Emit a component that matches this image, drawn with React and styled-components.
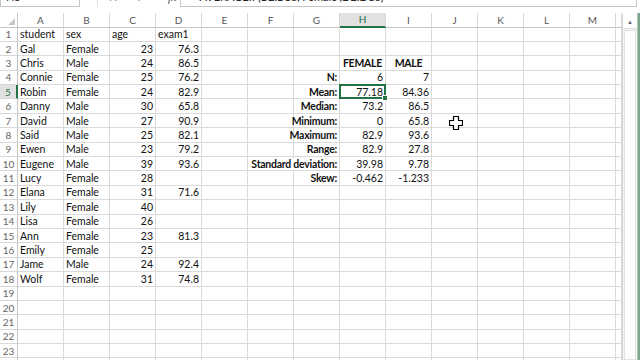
import React from "react";
import styled, { createGlobalStyle } from "styled-components";

const GlobalStyle = createGlobalStyle`
  html, body {
    margin: 0;
    padding: 0;
    background: #fff;
  }
  body {
    font-family: Lato, "Open Sans", sans-serif;
  }
`;

const COLS = ["A", "B", "C", "D", "E", "F", "G", "H", "I", "J", "K", "L", "M"];
const ROW_COUNT = 24;
const ACTIVE_COL = "H";
const ACTIVE_ROW = 5;

const students = [
  ["Gal", "Female", 23, "76.3"],
  ["Chris", "Male", 24, "86.5"],
  ["Connie", "Female", 25, "76.2"],
  ["Robin", "Female", 24, "82.9"],
  ["Danny", "Male", 30, "65.8"],
  ["David", "Male", 27, "90.9"],
  ["Said", "Male", 25, "82.1"],
  ["Ewen", "Male", 23, "79.2"],
  ["Eugene", "Male", 39, "93.6"],
  ["Lucy", "Female", 28, ""],
  ["Elana", "Female", 31, "71.6"],
  ["Lily", "Female", 40, ""],
  ["Lisa", "Female", 26, ""],
  ["Ann", "Female", 23, "81.3"],
  ["Emily", "Female", 25, ""],
  ["Jame", "Male", 24, "92.4"],
  ["Wolf", "Female", 31, "74.8"],
];

const stats = [
  ["N:", "6", "7"],
  ["Mean:", "77.18", "84.36"],
  ["Median:", "73.2", "86.5"],
  ["Minimum:", "0", "65.8"],
  ["Maximum:", "82.9", "93.6"],
  ["Range:", "82.9", "27.8"],
  ["Standard deviation:", "39.98", "9.78"],
  ["Skew:", "-0.462", "-1.233"],
];

// build a sparse map of cell contents: key "H5" -> { value, align, bold }
const buildCells = () => {
  const cells = {};
  const put = (ref, value, align = "left", bold = false) => {
    cells[ref] = { value, align, bold };
  };
  put("A1", "student");
  put("B1", "sex");
  put("C1", "age");
  put("D1", "exam1");
  students.forEach(([name, sex, age, exam], i) => {
    const r = i + 2;
    put(`A${r}`, name);
    put(`B${r}`, sex);
    put(`C${r}`, String(age), "right");
    if (exam) put(`D${r}`, exam, "right");
  });
  put("H3", "FEMALE", "center", true);
  put("I3", "MALE", "center", true);
  stats.forEach(([label, female, male], i) => {
    const r = i + 4;
    put(`G${r}`, label, "right", true);
    put(`H${r}`, female, "right");
    put(`I${r}`, male, "right");
  });
  return cells;
};

const cells = buildCells();

const Window = styled.div`
  position: relative;
  width: 640px;
  height: 360px;
  overflow: hidden;
  display: flex;
  flex-direction: column;
  background: #fff;
`;

const FormulaBar = styled.div`
  height: 13px;
  flex-shrink: 0;
  overflow: hidden;
`;

const FormulaRow = styled.div`
  display: flex;
  height: 20px;
  margin-top: -13px;
  font-family: "Segoe UI", Lato, sans-serif;
  font-size: 11px;
  color: #333;
`;

const NameBox = styled.div`
  width: 80px;
  box-sizing: border-box;
  border: 1px solid #c6c6c6;
  border-top: none;
  display: flex;
  align-items: center;
  padding-left: 5px;
`;

const Caret = styled.div`
  width: 17px;
  display: flex;
  align-items: center;
  justify-content: center;
  font-size: 8px;
  color: #777;
`;

const FormulaButtons = styled.div`
  width: 83px;
  display: flex;
  align-items: center;
  gap: 18px;
  padding-left: 10px;
  box-sizing: border-box;
  border-left: 1px dotted #c6c6c6;
  color: #999;
  font-size: 12px;
`;

const Fx = styled.span`
  font-family: "Liberation Serif", serif;
  font-style: italic;
  color: #555;
  margin-left: 4px;
`;

const FormulaInput = styled.div`
  flex: 1;
  margin-right: 3px;
  box-sizing: border-box;
  border: 1px solid #c6c6c6;
  border-top: none;
  display: flex;
  align-items: center;
  justify-content: space-between;
  padding: 0 4px 0 12px;
  color: #222;
`;

const Body = styled.div`
  flex: 1;
  min-height: 0;
  display: flex;
`;

const Sheet = styled.div`
  width: 622px;
  display: grid;
  grid-template-columns: 18px repeat(13, 46px) 6px;
  grid-template-rows: 14.5px repeat(${ROW_COUNT}, 14.4px);
  align-content: start;
  overflow: hidden;
  font-family: Lato, "Open Sans", sans-serif;
`;

const Corner = styled.div`
  box-sizing: border-box;
  border-right: 1px solid #c6c6c6;
  border-bottom: 1px solid #c6c6c6;
  display: flex;
  align-items: flex-end;
  justify-content: flex-end;
  padding: 0 2px 2px 0;
`;

const ColHeader = styled.div`
  box-sizing: border-box;
  display: flex;
  align-items: center;
  justify-content: center;
  font-size: 10px;
  color: ${(p) => (p.$active ? "#217346" : "#555")};
  background: ${(p) => (p.$active ? "#e1e1e1" : "#fff")};
  border-right: 1px solid #d8d8d8;
  border-bottom: ${(p) => (p.$active ? "2px solid #217346" : "1px solid #c6c6c6")};
`;

const RowHeader = styled.div`
  box-sizing: border-box;
  display: flex;
  align-items: center;
  justify-content: center;
  font-size: 10px;
  color: ${(p) => (p.$active ? "#217346" : "#666")};
  background: ${(p) => (p.$active ? "#e1e1e1" : "#fff")};
  border-right: ${(p) => (p.$active ? "2px solid #217346" : "1px solid #c6c6c6")};
  border-bottom: 1px solid #d8d8d8;
`;

const Cell = styled.div`
  position: relative;
  box-sizing: border-box;
  display: flex;
  align-items: center;
  justify-content: ${(p) =>
    p.$align === "right" ? "flex-end" : p.$align === "center" ? "center" : "flex-start"};
  padding: 0 2px;
  border-right: 1px solid #dadada;
  border-bottom: 1px solid #dadada;
  font-size: 10.5px;
  font-weight: ${(p) => (p.$bold ? 700 : 400)};
  letter-spacing: ${(p) => (p.$bold ? "-0.25px" : "0")};
  color: #111;
  white-space: nowrap;
  min-width: 0;

  ${(p) =>
    p.$selected &&
    `
    &::after {
      content: "";
      position: absolute;
      top: -1px;
      left: -1px;
      right: -1px;
      bottom: -1px;
      border: 2px solid #217346;
      z-index: 2;
    }
    &::before {
      content: "";
      position: absolute;
      right: -3px;
      bottom: -3px;
      width: 4px;
      height: 4px;
      background: #217346;
      border: 1px solid #fff;
      z-index: 3;
    }
  `}
`;

const CellText = styled.span`
  position: relative;
  z-index: 1;
  background: ${(p) => (p.$mask ? "#fff" : "transparent")};
  padding-left: ${(p) => (p.$mask ? "2px" : "0")};
`;

const Scrollbar = styled.div`
  width: 15px;
  margin-top: 1px;
  box-sizing: border-box;
  border-left: 1px solid #d4d4d4;
  background: #f3f3f3;
  display: flex;
  flex-direction: column;
`;

const ScrollButton = styled.div`
  height: 14px;
  display: flex;
  align-items: center;
  justify-content: center;
  background: #fff;
  border-bottom: 1px solid #dcdcdc;
  font-size: 6px;
  color: #666;
`;

const ScrollThumb = styled.div`
  flex: 1;
  margin: 1px 1px 0;
  background: #fdfdfd;
  border: 1px solid #e2e2e2;
`;

const Frame = styled.div`
  width: 3px;
  box-sizing: border-box;
  border-left: 1px solid #b9c4bd;
  background: #7aa68a;
`;

const Cursor = styled.svg`
  position: absolute;
  left: 449px;
  top: 116px;
  z-index: 5;
`;

const renderRow = (r) => {
  const isActiveRow = r === ACTIVE_ROW;
  return [
    <RowHeader key={`h${r}`} $active={isActiveRow}>
      {r}
    </RowHeader>,
    ...COLS.map((c) => {
      const ref = `${c}${r}`;
      const cell = cells[ref];
      const overflow = cell && cell.value.length > 12;
      return (
        <Cell
          key={ref}
          $align={cell ? cell.align : "left"}
          $bold={cell && cell.bold}
          $selected={c === ACTIVE_COL && isActiveRow}
        >
          {cell && <CellText $mask={overflow}>{cell.value}</CellText>}
        </Cell>
      );
    }),
    <Cell key={`n${r}`} />,
  ];
};

const App = () => {
  const rows = [];
  for (let r = 1; r <= ROW_COUNT; r++) rows.push(...renderRow(r));

  return (
    <Window>
      <GlobalStyle />
      <FormulaBar>
        <FormulaRow>
          <NameBox>H5</NameBox>
          <Caret>▼</Caret>
          <FormulaButtons>
            <span>✕</span>
            <span>✓</span>
            <Fx>fx</Fx>
          </FormulaButtons>
          <FormulaInput>
            <span>=AVERAGEIF(B2:B18,"Female",D2:D18)</span>
            <Caret>▾</Caret>
          </FormulaInput>
        </FormulaRow>
      </FormulaBar>
      <Body>
        <Sheet>
          <Corner>
            <svg width="7" height="7" viewBox="0 0 7 7">
              <polygon points="7,0 7,7 0,7" fill="#c8c8c8" />
            </svg>
          </Corner>
          {COLS.map((c) => (
            <ColHeader key={c} $active={c === ACTIVE_COL}>
              {c}
            </ColHeader>
          ))}
          <ColHeader />
          {rows}
        </Sheet>
        <Scrollbar>
          <ScrollButton>▲</ScrollButton>
          <ScrollThumb />
        </Scrollbar>
        <Frame />
      </Body>
      <Cursor width="14" height="14" viewBox="0 0 14 14">
        <path
          d="M4.5 0.5h5v4h4v5h-4v4h-5v-4h-4v-5h4z"
          fill="#fff"
          stroke="#000"
          strokeWidth="1.2"
        />
      </Cursor>
    </Window>
  );
};

export default App;
